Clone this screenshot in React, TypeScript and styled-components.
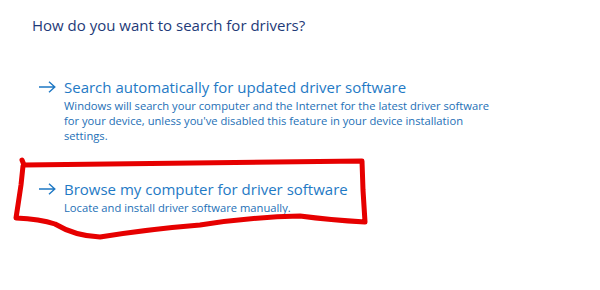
import React from "react"
import styled, { createGlobalStyle } from "styled-components"

const GlobalStyle = createGlobalStyle`
  html, body {
    margin: 0;
    padding: 0;
    background: #ffffff;
  }
`

const Page = styled.div`
  position: relative;
  width: 600px;
  height: 290px;
  overflow: hidden;
  padding: 14px 0 0 32px;
  box-sizing: border-box;
  font-family: "Open Sans", "Noto Sans", sans-serif;
`

const Title = styled.h1`
  margin: 0;
  font-size: 15px;
  font-weight: 400;
  line-height: 22px;
  color: #1e3a78;
`

const Options = styled.div`
  display: flex;
  flex-direction: column;
  gap: 36px;
  margin-top: 41px;
  padding-left: 6px;
`

const Option = styled.div`
  display: flex;
  align-items: flex-start;
  gap: 8px;
`

const Arrow = styled.span`
  display: flex;
  align-items: center;
  height: 20px;
  color: #1e78c4;
`

const OptionBody = styled.div`
  display: flex;
  flex-direction: column;
`

const OptionTitle = styled.div`
  font-size: 15px;
  line-height: 21px;
  color: #1f7ac5;
`

const OptionText = styled.div`
  font-size: 11.2px;
  line-height: 15px;
  color: #1d6fb6;
  max-width: 432px;
`

const Scribble = styled.svg`
  position: absolute;
  left: 0;
  top: 0;
  pointer-events: none;
`

function ArrowIcon() {
  return (
    <svg width="18" height="12" viewBox="0 0 18 12">
      <path
        d="M1 6 H16.5 M11 0.8 L16.8 6 L11 11.2"
        fill="none"
        stroke="currentColor"
        strokeWidth="1.4"
      />
    </svg>
  )
}

export default function App() {
  return (
    <>
      <GlobalStyle />
      <Page>
        <Title>How do you want to search for drivers?</Title>
        <Options>
          <Option>
            <Arrow>
              <ArrowIcon />
            </Arrow>
            <OptionBody>
              <OptionTitle>Search automatically for updated driver software</OptionTitle>
              <OptionText>
                Windows will search your computer and the Internet for the latest driver software
                for your device, unless you've disabled this feature in your device installation
                settings.
              </OptionText>
            </OptionBody>
          </Option>
          <Option>
            <Arrow>
              <ArrowIcon />
            </Arrow>
            <OptionBody>
              <OptionTitle>Browse my computer for driver software</OptionTitle>
              <OptionText>Locate and install driver software manually.</OptionText>
            </OptionBody>
          </Option>
        </Options>
        <Scribble width="600" height="290" viewBox="0 0 600 290">
          <path
            d="M22 160 L24 165 Q190 163 362 161 L363 190 L365 222 Q330 220 300 216 Q250 217 200 225 Q150 229 100 237 Q75 236 55 224 Q40 219 16 218 L18 205 L21 185 L23 166"
            fill="none"
            stroke="#e60000"
            strokeWidth="5"
            strokeLinejoin="round"
            strokeLinecap="round"
          />
        </Scribble>
      </Page>
    </>
  )
}
